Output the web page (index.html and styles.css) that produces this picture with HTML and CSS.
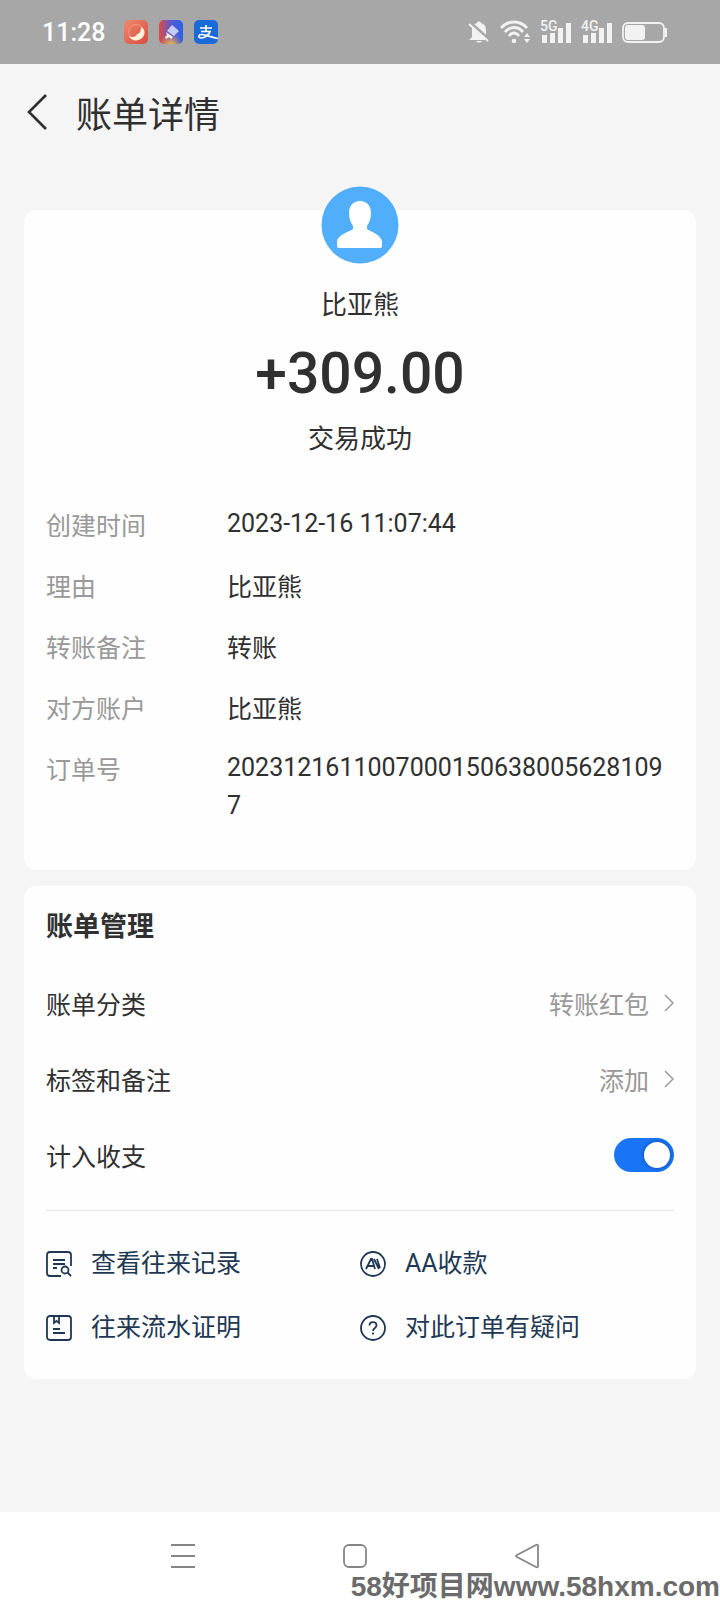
FILE: index.html
```html
<!DOCTYPE html>
<html lang="zh-CN">
<head>
<meta charset="utf-8">
<meta name="viewport" content="width=device-width, initial-scale=1">
<title>账单详情</title>
<link rel="stylesheet" href="styles.css">
</head>
<body>
<div class="status">
  <div class="status-left">
    <span class="clock">11:28</span>
    <svg class="app" viewBox="0 0 24 24" aria-hidden="true">
      <defs><linearGradient id="g1" x1="0" y1="0" x2="1" y2="1"><stop offset="0" stop-color="#ef8a6c"/><stop offset="1" stop-color="#d94a40"/></linearGradient></defs>
      <rect width="24" height="24" rx="5" fill="url(#g1)"/>
      <circle cx="12" cy="12" r="7.500" fill="none" stroke="#f29a82" stroke-width="1"/>
      <path d="M17 7C21 9 22 14 18 18C14 22 7 21 5 16C9 18 12 17 13 14C15 14 17 12 17 7Z" fill="#fff1dc"/>
    </svg>
    <svg class="app" viewBox="0 0 24 24" aria-hidden="true">
      <defs><linearGradient id="g2" x1="0" y1="0" x2="1" y2="0"><stop offset="0" stop-color="#e2493f"/><stop offset=".5" stop-color="#5b58d0"/><stop offset="1" stop-color="#2a62e8"/></linearGradient>
      <radialGradient id="g3" cx=".5" cy="1.05" r=".5"><stop offset="0" stop-color="#ffc638"/><stop offset="1" stop-color="#ff9a38" stop-opacity="0"/></radialGradient></defs>
      <rect width="24" height="24" rx="5" fill="url(#g2)"/><rect width="24" height="24" rx="5" fill="url(#g3)"/>
      <path d="M13 5L20 11L15 16L8 11Z" fill="#c5cdfa"/><path d="M7 12L14 17L12 19L10 17L7 19L6 17L8 15Z" fill="#fff0e8"/>
    </svg>
    <svg class="app" viewBox="0 0 24 24" aria-hidden="true">
      <rect width="24" height="24" rx="5" fill="#1a6bd8"/>
      <path d="M6 8H18M12 5V11M7 11.500H16C15 15 11 18 7 18C4 18 4 14.500 8 14.500C12 14.500 17 17.500 24 18.500" fill="none" stroke="#fff" stroke-width="1.700"/>
    </svg>
  </div>
  <div class="status-right">
    <svg width="22" height="24" viewBox="0 0 22 24" aria-hidden="true">
      <path d="M4 17V10C4 6 6 4 9 3C9 1 13 1 13 3C16 4 18 6 18 10V16L21 20H1Z" fill="#f2f2f2"/>
      <path d="M8 21H14C13 23 9 23 8 21Z" fill="#f2f2f2"/>
      <path d="M2 3L22 21" stroke="#a7a7a7" stroke-width="4"/><path d="M1 4L20 21" stroke="#f2f2f2" stroke-width="2"/>
    </svg>
    <svg width="30" height="24" viewBox="0 0 30 24" aria-hidden="true">
      <g fill="none" stroke="#f2f2f2" stroke-width="2.800"><path d="M1 8C8 0 20 0 27 8"/><path d="M5 12C10 6 18 6 23 12"/><path d="M9 16C12 12 16 12 19 16"/></g>
      <circle cx="14" cy="21" r="2.300" fill="#f2f2f2"/><path d="M27 13L30 17H24ZM27 23L30 19H24Z" fill="#f2f2f2"/>
    </svg>
    <span class="signal"><svg width="31" height="24" viewBox="0 0 31 24" aria-hidden="true"><path d="M2 15H7V23H2ZM10 13H15V23H10ZM18 8H23V23H18ZM26 3H31V23H26Z" fill="#f2f2f2"/></svg><span class="net">5G</span></span>
    <span class="signal"><svg width="31" height="24" viewBox="0 0 31 24" aria-hidden="true"><path d="M2 15H7V23H2ZM10 13H15V23H10ZM18 8H23V23H18ZM26 3H31V23H26Z" fill="#f2f2f2"/></svg><span class="net">4G</span></span>
    <svg width="45" height="24" viewBox="0 0 45 24" aria-hidden="true">
      <rect x="1" y="3" width="41" height="19" rx="5" fill="none" stroke="#f2f2f2" stroke-width="1.800"/>
      <rect x="3" y="5" width="20" height="15" rx="3" fill="#f2f2f2"/><path d="M44 8V17" stroke="#f2f2f2" stroke-width="2"/>
    </svg>
  </div>
</div>

<header class="top">
  <button class="back" type="button" aria-label="返回"><svg width="20" height="36" viewBox="0 0 20 36" aria-hidden="true"><path d="M19 1L2 18L19 35" fill="none" stroke="#303030" stroke-width="2.600"/></svg></button>
  <h1 class="title">账单详情</h1>
</header>

<main class="content">
  <section class="card bill">
    <svg class="avatar" viewBox="0 0 78 78" aria-hidden="true">
      <circle cx="39" cy="39" r="38.500" fill="#50aefb"/>
      <path d="M39 15C46 15 50 20 50 27C50 33 48 37 46 40V43C50 46 61 49 61 56V60Q61 62 59 62H18Q16 62 16 60V56C16 49 28 46 32 43V40C30 37 28 33 28 27C28 20 32 15 39 15Z" fill="#fff"/>
    </svg>
    <p class="line">比亚熊</p>
    <p class="amount">+309.00</p>
    <p class="line">交易成功</p>
    <dl class="facts">
      <dt>创建时间</dt><dd>2023-12-16 11:07:44</dd>
      <dt>理由</dt><dd class="han">比亚熊</dd>
      <dt>转账备注</dt><dd class="han">转账</dd>
      <dt>对方账户</dt><dd class="han">比亚熊</dd>
      <dt>订单号</dt><dd>20231216110070001506380056281097</dd>
    </dl>
  </section>

  <section class="card manage">
    <h2 class="subtitle">账单管理</h2>
    <button class="row" type="button"><span>账单分类</span><span class="value">转账红包<svg width="10" height="18" viewBox="0 0 10 18" aria-hidden="true"><path d="M1 1L9 9L1 17" fill="none" stroke="#999" stroke-width="1.500"/></svg></span></button>
    <button class="row" type="button"><span>标签和备注</span><span class="value">添加<svg width="10" height="18" viewBox="0 0 10 18" aria-hidden="true"><path d="M1 1L9 9L1 17" fill="none" stroke="#999" stroke-width="1.500"/></svg></span></button>
    <label class="row"><span>计入收支</span><input class="switch" type="checkbox" role="switch" checked></label>
    <nav class="links">
      <a class="link" href="#records"><svg class="icon" viewBox="0 0 26 26" aria-hidden="true"><path d="M15 25H4Q1 25 1 22V4Q1 1 4 1H22Q25 1 25 4V15M7 9H19M7 13H19M7 17H11"/><circle cx="19" cy="19" r="3.500"/><path d="M21.500 21.500L25 25"/></svg>查看往来记录</a>
      <a class="link" href="#aa"><svg class="icon" viewBox="0 0 26 26" aria-hidden="true"><circle cx="13" cy="13" r="12"/><path d="M6 18L11 8H12L15 18M8 15H14M14 8L19 18M17 8L20 17"/></svg>AA收款</a>
      <a class="link" href="#proof"><svg class="icon" viewBox="0 0 26 26" aria-hidden="true"><rect x="1" y="1" width="24" height="24" rx="3"/><path d="M8 1V8L10.500 6L13 8V1M7 14H14M7 18H19"/></svg>往来流水证明</a>
      <a class="link" href="#help"><svg class="icon" viewBox="0 0 26 26" aria-hidden="true"><circle cx="13" cy="13" r="12"/><path d="M9.500 10.500C9.500 6 16.500 6 16.500 10.500C16.500 13 13 13 13 16M13 17.500V19.500"/></svg>对此订单有疑问</a>
    </nav>
  </section>
</main>

<footer class="system">
  <div class="keys">
    <button class="key" type="button" aria-label="菜单"><svg width="26" height="26" viewBox="0 0 26 26" aria-hidden="true"><path d="M1 2H25M1 13H25M1 24H25"/></svg></button>
    <button class="key" type="button" aria-label="主页"><svg width="26" height="26" viewBox="0 0 26 26" aria-hidden="true"><rect x="2" y="2" width="22" height="22" rx="5"/></svg></button>
    <button class="key" type="button" aria-label="返回"><svg width="26" height="26" viewBox="0 0 26 26" aria-hidden="true"><path d="M22 2Q24 1 24 3V23Q24 25 22 24L3 14Q1 13 3 12Z"/></svg></button>
  </div>
  <span class="mark">58好项目网www.58hxm.com</span>
</footer>
</body>
</html>
```
FILE: styles.css
```css
* { box-sizing: border-box; }
body {
  margin: 0;
  min-height: 100vh;
  display: flex;
  flex-direction: column;
  background: #f5f5f5;
  color: #303030;
  font-family: Roboto, "Noto Sans CJK SC", sans-serif;
  font-size: 25px;
  line-height: 38px;
}
h1, h2, p, dl, dd { margin: 0; }
button {
  border: 0;
  padding: 0;
  background: none;
  color: inherit;
  font: inherit;
  cursor: pointer;
}
svg { display: block; flex: none; }

.status {
  height: 64px;
  padding: 0 53px 0 42px;
  display: flex;
  align-items: center;
  justify-content: space-between;
  background: #a7a7a7;
  color: #fff;
}
.status-left { display: flex; align-items: center; gap: 11px; }
.clock { margin-right: 8px; padding-top: 2px; font-size: 25px; font-weight: 500; }
.app { width: 24px; height: 24px; }
.status-right { display: flex; align-items: center; gap: 10px; }
.signal { position: relative; }
.net {
  position: absolute;
  left: 0;
  top: 0;
  color: #f2f2f2;
  font-size: 14px;
  font-weight: 500;
  line-height: 13px;
}

.top {
  height: 96px;
  padding: 0 27px;
  display: flex;
  align-items: center;
  gap: 29px;
}
.title {
  font-family: "Noto Sans CJK SC", sans-serif;
  font-size: 36px;
  font-weight: 400;
  line-height: 48px;
}

.content { flex: 1; padding: 50px 24px 0; }
.card { padding: 0 22px; border-radius: 12px; background: #fefefe; }

.bill {
  padding-bottom: 45px;
  display: flex;
  flex-direction: column;
  align-items: center;
}
.avatar { width: 78px; height: 78px; margin-top: -24px; }
.line { margin-top: 22px; font-size: 26px; }
.amount {
  margin-top: 16px;
  font-size: 57px;
  font-weight: 500;
  line-height: 68px;
}
.amount + .line { margin-top: 12px; }
.facts {
  width: 100%;
  margin-top: 47px;
  display: grid;
  grid-template-columns: 181px 1fr;
  row-gap: 23px;
}
.facts dt { color: #999; }
.facts dd { word-break: break-all; }
.facts dt, .facts .han { font-family: "Noto Sans CJK SC", sans-serif; }

.manage { margin-top: 16px; padding-top: 22px; padding-bottom: 32px; }
.subtitle { font-size: 27px; font-weight: 700; }
.row {
  width: 100%;
  height: 76px;
  display: flex;
  align-items: center;
  justify-content: space-between;
  font-family: "Noto Sans CJK SC", sans-serif;
}
.subtitle + .row { margin-top: 19px; }
.value { display: flex; align-items: center; gap: 15px; color: #999; }
.switch {
  appearance: none;
  width: 60px;
  height: 34px;
  margin: 0;
  padding: 4px;
  display: flex;
  justify-content: flex-end;
  border-radius: 17px;
  background: #1975f6;
}
.switch::before {
  content: "";
  width: 26px;
  height: 26px;
  border-radius: 50%;
  background: #fff;
  box-shadow: 0 0 4px rgba(0, 0, 0, .4);
}
.switch:not(:checked) { justify-content: flex-start; background: #ccc; }
.links {
  margin-top: 17px;
  padding-top: 34px;
  display: grid;
  grid-template-columns: 1fr 1fr;
  row-gap: 26px;
  border-top: 1px solid #e6e6e6;
}
.link {
  display: flex;
  align-items: center;
  gap: 19px;
  color: #1f3854;
  text-decoration: none;
}
.icon { width: 26px; height: 26px; fill: none; stroke: #1f3854; stroke-width: 1.800; }

.system { position: relative; height: 88px; background: #fff; }
.keys {
  height: 88px;
  padding: 0 107px 0 97px;
  display: flex;
  align-items: center;
  justify-content: space-around;
}
.key svg { fill: none; stroke: #858585; stroke-width: 1.800; }
.mark {
  position: absolute;
  right: 0;
  bottom: 0;
  color: #6b6b6b;
  font-family: "Liberation Sans", "Noto Sans CJK SC", sans-serif;
  font-size: 28px;
  font-weight: 700;
  line-height: 26px;
  white-space: nowrap;
}
```
